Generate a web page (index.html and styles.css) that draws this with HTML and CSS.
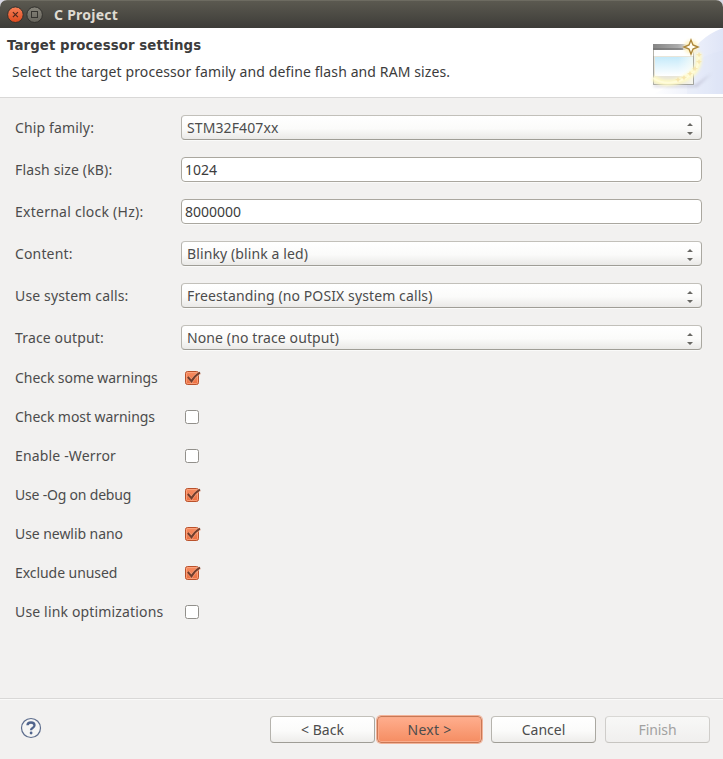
FILE: index.html
```
<!DOCTYPE html>
<html lang="en">
<head>
<meta charset="utf-8">
<title>C Project</title>
<link rel="stylesheet" href="styles.css">
</head>
<body>
<svg class="defs" width="0" height="0" aria-hidden="true">
  <defs>
    <linearGradient id="orange" x1="0" y1="0" x2="0" y2="1"><stop offset="0" stop-color="#f78d62"/><stop offset="1" stop-color="#ec6f40"/></linearGradient>
    <symbol id="checked" viewBox="0 0 17 16">
      <rect x="1.5" y="1.5" width="13" height="13" rx="2" fill="url(#orange)" stroke="#b9512b"/>
      <rect x="2.5" y="2.5" width="11" height="11" rx="1" fill="none" stroke="#ffb08d" stroke-opacity=".65"/>
      <path d="M4.2 7.2 7.6 11.3Q10.2 6.2 16 2.7" fill="none" stroke="#f9b395" stroke-width="3.4" stroke-opacity=".6"/>
      <path d="M3.8 7 7.5 11.2Q10.2 6.2 16 2.5" fill="none" stroke="#713e2d" stroke-width="2"/>
    </symbol>
    <symbol id="unchecked" viewBox="0 0 17 16">
      <rect x="1.5" y="1.5" width="13" height="13" rx="2" fill="#fff" stroke="#92908b"/>
    </symbol>
    <symbol id="arrows" viewBox="0 0 8 14"><path d="M1 4 4 1l3 3zM1 10h6l-3 3z" fill="#686763"/></symbol>
  </defs>
</svg>
<div class="window">
  <div class="titlebar">
    <svg class="controls" width="38" height="18" viewBox="0 0 38 18">
      <defs>
        <linearGradient id="close" x1="0" y1="0" x2="0" y2="1"><stop offset="0" stop-color="#f78158"/><stop offset="1" stop-color="#dd491d"/></linearGradient>
        <linearGradient id="max" x1="0" y1="0" x2="0" y2="1"><stop offset="0" stop-color="#87857b"/><stop offset="1" stop-color="#66645c"/></linearGradient>
      </defs>
      <circle cx="8.4" cy="8.7" r="7.8" fill="url(#close)" stroke="#32312d"/>
      <path d="m5.9 6.2 5 5m0-5-5 5" stroke="#50281c" stroke-width="1.2"/>
      <circle cx="27.6" cy="8.7" r="7.8" fill="url(#max)" stroke="#32312d"/>
      <rect x="24.5" y="5.5" width="6" height="6" fill="none" stroke="#353430"/>
    </svg>
    <span class="caption">C Project</span>
  </div>
  <header class="banner">
    <div class="heading">
      <h1>Target processor settings</h1>
      <p>Select the target processor family and define flash and RAM sizes.</p>
    </div>
    <svg class="wizard" width="75" height="66" viewBox="0 0 75 66">
      <defs>
        <linearGradient id="sky" x1="0" y1="0" x2="1" y2="0"><stop offset="0" stop-color="#fff"/><stop offset=".5" stop-color="#eff2fb"/><stop offset="1" stop-color="#dfe5f7"/></linearGradient>
        <linearGradient id="bar" x1="0" y1="0" x2="1" y2="0"><stop offset="0" stop-color="#858585"/><stop offset=".6" stop-color="#aaa"/><stop offset="1" stop-color="#e8e8e8"/></linearGradient>
        <linearGradient id="pane" x1="0" y1="0" x2="0" y2="1"><stop offset="0" stop-color="#c5eafa"/><stop offset="1" stop-color="#fff"/></linearGradient>
        <linearGradient id="fade" x1="0" y1="0" x2="1" y2="0"><stop offset="0" stop-color="#fff" stop-opacity="0"/><stop offset="1" stop-color="#fffff5"/></linearGradient>
        <filter id="soft" x="-30%" y="-30%" width="160%" height="160%"><feGaussianBlur stdDeviation="1.8"/></filter>
      </defs>
      <path d="M75 0Q48 10 39 34 32 55 5 66H75z" fill="url(#sky)"/>
      <path d="M75 23Q57 25 39 40V66H75z" fill="#d9e1f5" opacity=".2"/>
      <path d="M5 57h42L64 45l-15 14H6z" fill="#9290aa" opacity=".4" filter="url(#soft)"/>
      <path d="M5.500 16.500h40v40h-40z" fill="#fff" stroke="#b5b3aa"/>
      <path d="M5 16h41v6H5z" fill="url(#bar)"/>
      <path d="M5 20h30v2H5z" fill="#6f6f6f" opacity=".6"/>
      <path d="M6 28h39v28H6z" fill="#e8e5d9"/>
      <path d="M7 29h38v19H7z" fill="url(#pane)"/>
      <path d="M30 29h15v27H30z" fill="url(#fade)" opacity=".7"/>
      <path d="M5.500 28v28.500h40V28" fill="none" stroke="#a3a4a0"/>
      <path d="M50 25Q54 42 36 51 18 59 5 50" fill="none" stroke="#fffac5" stroke-width="6" filter="url(#soft)"/>
      <path d="M50 25Q54 42 36 51 18 59 5 50" fill="none" stroke="#fffce2" stroke-width="2" opacity=".7"/>
      <path d="m51 24 1 2 2 .5-2 1-1 2-1-2-2-1 2-.5zM51 31l1 2 2 .5-2 1-1 2-1-2-2-1 2-.5zM47 38l1 2 2 .5-2 1-1 2-1-2-2-1 2-.5zM42 43l1 2 2 .5-2 1-1 2-1-2-2-1 2-.5zM36 47l1 2 2 .5-2 1-1 2-1-2-2-1 2-.5zM30 49l1 2 2 .5-2 1-1 2-1-2-2-1 2-.5z" fill="#f3dda0" opacity=".7"/>
      <circle cx="43" cy="19" r="7" fill="#fff4c9" filter="url(#soft)"/>
      <path d="M43 12 45 17l5 2-5 2-2 5-2-5-5-2 5-2z" fill="#fffdf2" stroke="#ad873b" stroke-width="1.400"/>
    </svg>
  </header>
  <main>
    <div class="fields">
      <div class="row"><label>Chip family:</label><div class="combo"><span>STM32F407xx</span><svg width="8" height="14"><use href="#arrows"/></svg></div></div>
      <div class="row"><label>Flash size (kB):</label><div class="entry"><span>1024</span></div></div>
      <div class="row"><label class="wide">External clock (Hz):</label><div class="entry"><span>8000000</span></div></div>
      <div class="row"><label>Content:</label><div class="combo"><span>Blinky (blink a led)</span><svg width="8" height="14"><use href="#arrows"/></svg></div></div>
      <div class="row"><label>Use system calls:</label><div class="combo"><span>Freestanding (no POSIX system calls)</span><svg width="8" height="14"><use href="#arrows"/></svg></div></div>
      <div class="row"><label>Trace output:</label><div class="combo"><span>None (no trace output)</span><svg width="8" height="14"><use href="#arrows"/></svg></div></div>
    </div>
    <div class="options">
      <div class="option"><label>Check some warnings</label><svg width="17" height="16"><use href="#checked"/></svg></div>
      <div class="option"><label>Check most warnings</label><svg width="17" height="16"><use href="#unchecked"/></svg></div>
      <div class="option"><label class="loose">Enable -Werror</label><svg width="17" height="16"><use href="#unchecked"/></svg></div>
      <div class="option"><label class="tight">Use -Og on debug</label><svg width="17" height="16"><use href="#checked"/></svg></div>
      <div class="option"><label>Use newlib nano</label><svg width="17" height="16"><use href="#checked"/></svg></div>
      <div class="option"><label>Exclude unused</label><svg width="17" height="16"><use href="#checked"/></svg></div>
      <div class="option"><label class="loose">Use link optimizations</label><svg width="17" height="16"><use href="#unchecked"/></svg></div>
    </div>
  </main>
  <footer>
    <svg class="help" width="22" height="22" viewBox="0 0 22 22"><circle cx="11" cy="11" r="9.5" fill="#f5f5f4" stroke="#5d6d8d" stroke-width="1.200"/><path d="M7.500 8.200Q7.500 5.500 11 5.500q3.500 0 3.500 2.700 0 1.600-1.900 2.700-1.600.9-1.600 2.300" fill="none" stroke="#50648c" stroke-width="2.300"/><circle cx="11.100" cy="16" r="1.400" fill="#50648c"/></svg>
    <div class="buttons">
      <button class="back">&lt; Back</button>
      <button class="next">Next &gt;</button>
      <button class="cancel">Cancel</button>
      <button class="finish" disabled>Finish</button>
    </div>
  </footer>
</div>
</body>
</html>
```
FILE: styles.css
```
* { box-sizing: border-box; }
body { margin: 0; background: #d8d8e4; font: 14px/20px "Noto Sans", "Open Sans", sans-serif; color: #4c4c4c; }
.defs { position: absolute; }
svg { display: block; flex: none; }
.window { width: 723px; height: 759px; display: flex; flex-direction: column; background: #f2f1f0; border-radius: 7px 7px 0 0; overflow: hidden; }
.titlebar { height: 28px; flex: none; display: flex; align-items: center; padding: 1px 0 0 7px; background: linear-gradient(#5b5950, #3d3c38); border-top: 1px solid #6d6b61; }
.caption { margin-left: 9px; color: #dfdbd2; font-weight: 700; letter-spacing: .25px; }
.banner { height: 70px; flex: none; display: flex; justify-content: space-between; background: #fff; border-bottom: 1px solid #d9d8d7; }
.heading { padding: 8px 0 0 7px; white-space: nowrap; }
h1 { margin: 0; font: 700 13.33px/20px "DejaVu Sans", sans-serif; letter-spacing: .08px; color: #3c3c3c; }
p { margin: 6px 0 0 5px; letter-spacing: .11px; color: #3c3c3c; }
main { flex: 1; padding: 17px 21px 0 15px; }
.fields { display: flex; flex-direction: column; gap: 17px; }
.row { height: 25px; display: grid; grid-template-columns: 166px 521px; align-items: center; }
.row label { padding-top: 1px; letter-spacing: .15px; }
.row .wide { letter-spacing: .25px; }
.combo, .entry { height: 25px; display: flex; align-items: center; justify-content: space-between; padding: 1px 0 0; border: 1px solid #aaa79f; border-radius: 4px; box-shadow: 0 1px #fafaf9; }
.combo { padding: 1px 7px 0 5px; border-color: #c2c0ba #aaa8a1 #9f9d96 #b5b3ad; background: linear-gradient(#fff, #fbfbfa 55%, #eae9e7); letter-spacing: .11px; }
.combo svg { margin-top: 2px; }
.entry { padding-left: 3px; background: #fff; color: #3c3c3c; }
.options { display: flex; flex-direction: column; gap: 19px; margin-top: 18px; }
.option { height: 20px; display: grid; grid-template-columns: 169px 17px; align-items: center; }
.option label { letter-spacing: -.06px; }
.option .loose { letter-spacing: .16px; }
.option .tight { letter-spacing: -.2px; }
footer { height: 61px; flex: none; display: flex; justify-content: space-between; padding: 17px 13px 0 20px; border-top: 1px solid #d9d8d7; box-shadow: inset 0 1px #fafaf9; }
.help { margin-top: 1px; }
.buttons { display: flex; }
button { width: 105px; height: 27px; margin: 0; padding: 0; border: 1px solid; border-color: #c2c0ba #aaa8a1 #9f9d96 #b5b3ad; border-radius: 4px; background: linear-gradient(#fff, #fbfbfa 55%, #eeedeb); color: #4c4c4c; font: inherit; letter-spacing: 0; }
.next { margin-left: 2px; border-color: #c97855; background: linear-gradient(#ffae8e, #f58d62); box-shadow: inset 0 0 0 1px #f9ac8c, 0 0 0 1px #f3b399; letter-spacing: .25px; }
.cancel { margin-left: 9px; }
.finish { margin-left: 9px; border-color: #d9d8d5 #cfcdca #c7c5c1; background: linear-gradient(#f8f8f7, #f0efee); color: #a2a1a0; letter-spacing: -.1px; }
```
